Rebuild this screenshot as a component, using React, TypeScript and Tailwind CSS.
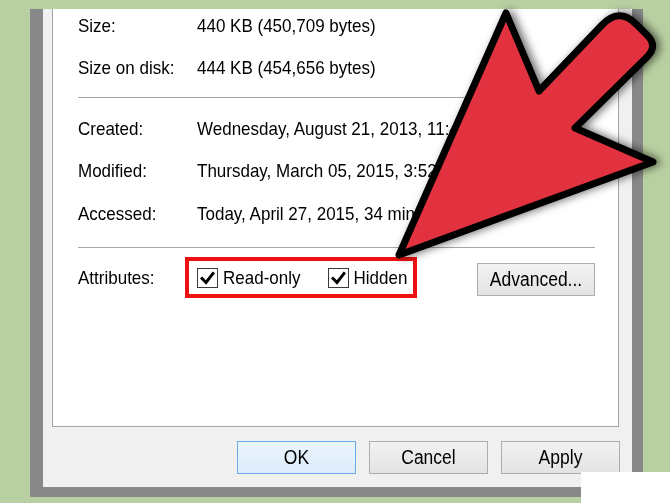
import React from "react";

const font = { fontFamily: '"Liberation Sans", Arial, sans-serif' };

function T({ children }: { children: React.ReactNode }) {
  return <span className="inline-block scale-y-[1.13]">{children}</span>;
}

function Row({ label, value, className }: { label: string; value: string; className?: string }) {
  return (
    <div className={"flex h-[20px] leading-[20px] whitespace-nowrap " + (className ?? "")}>
      <div className="w-[119px] shrink-0">
        <T>{label}</T>
      </div>
      <div>
        <T>{value}</T>
      </div>
    </div>
  );
}

function Check() {
  return (
    <div className="w-[21px] h-[20px] shrink-0 border border-[#3a3a3a] bg-white flex items-center justify-center">
      <svg width="15" height="14" viewBox="0 0 15 14">
        <path d="M2 7.5 L6 11.5 L13 2.5" fill="none" stroke="#000" strokeWidth="3" strokeLinecap="square" strokeLinejoin="miter" />
      </svg>
    </div>
  );
}

function Btn({ children, primary }: { children: React.ReactNode; primary?: boolean }) {
  return (
    <div
      className={
        "w-[119px] h-[33px] flex items-center justify-center text-[17.5px] text-black border " +
        (primary
          ? "border-[#6aaae6] bg-linear-to-b from-[#eaf4fc] to-[#dcecfc]"
          : "border-[#adadad] bg-linear-to-b from-[#f2f2f2] to-[#e3e3e3]")
      }
    >
      <T>{children}</T>
    </div>
  );
}

export default function App() {
  return (
    <div
      className="relative w-[670px] h-[503px] overflow-hidden bg-[#b8d0a1] pt-[9px] pl-[30px] text-[17px] text-black"
      style={font}
    >
      <div className="flex flex-col w-[613px] h-[488px] border-l-[13px] border-r-[11px] border-b-[10px] border-[#888888] bg-[#f0f0f0]">
        <div className="pl-[9px] pr-[13px]">
          <div className="w-[567px] h-[418px] bg-white border-l border-r border-b border-[#a3a3a3] pt-[7px] pl-[25px]">
            <Row label="Size:" value="440 KB (450,709 bytes)" />
            <Row label="Size on disk:" value="444 KB (454,656 bytes)" className="mt-[22px]" />
            <div className="mt-[19px] w-[517px] h-px bg-[#a6a6a6]" />
            <Row label="Created:" value="Wednesday, August 21, 2013, 11:42:18 AM" className="mt-[21px]" />
            <Row label="Modified:" value="Thursday, March 05, 2015, 3:52:37 PM" className="mt-[22px]" />
            <Row label="Accessed:" value="Today, April 27, 2015, 34 minutes ago" className="mt-[23px]" />
            <div className="mt-[23px] w-[517px] h-px bg-[#a6a6a6]" />
            <div className="mt-[9px] h-[41px] flex items-center whitespace-nowrap">
              <div className="w-[107px] shrink-0 leading-[20px]">
                <T>Attributes:</T>
              </div>
              <div className="h-[41px] border-4 border-[#ee1111] pl-[8px] pr-[6px] flex items-center">
                <Check />
                <span className="ml-[5px] leading-[20px]">
                  <T>Read-only</T>
                </span>
                <div className="ml-[27px]">
                  <Check />
                </div>
                <span className="ml-[5px] leading-[20px]">
                  <T>Hidden</T>
                </span>
              </div>
              <div className="ml-auto mr-[23px] self-start mt-[6px] w-[118px] h-[33px] flex items-center justify-center border border-[#adadad] bg-linear-to-b from-[#f2f2f2] to-[#e3e3e3] text-[17.5px]">
                <T>Advanced...</T>
              </div>
            </div>
          </div>
        </div>
        <div className="flex justify-end gap-[13px] pt-[14px] pr-[12px]">
          <Btn primary>OK</Btn>
          <Btn>Cancel</Btn>
          <Btn>Apply</Btn>
        </div>
      </div>

      <div className="absolute left-[581px] top-[472px] w-[89px] h-[31px] bg-white" />

      <svg
        className="absolute left-0 top-0 pointer-events-none"
        width="670"
        height="503"
        viewBox="0 0 670 503"
      >
        <defs>
          <filter id="sh" x="-20%" y="-20%" width="140%" height="140%">
            <feDropShadow dx="4" dy="0" stdDeviation="4" floodColor="#000" floodOpacity="0.55" />
          </filter>
        </defs>
        <path
          d="M399 255 L506 13 L539 91 L602 25 Q619 7 636 24 L647 35 Q658 46 647 57 L575 128 L653 162 Z"
          fill="#e2323f"
          stroke="#000"
          strokeWidth="7"
          strokeLinejoin="round"
          filter="url(#sh)"
        />
      </svg>
    </div>
  );
}
